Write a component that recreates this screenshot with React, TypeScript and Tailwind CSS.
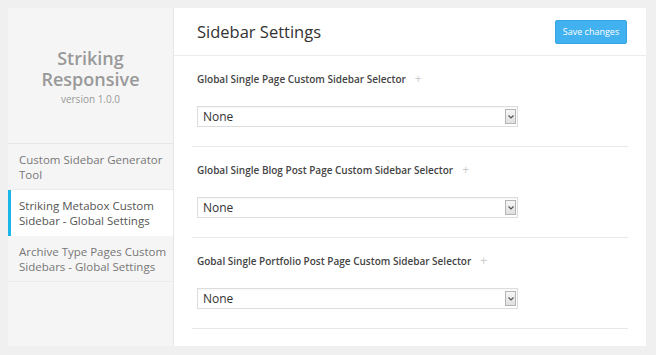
import React from "react";

function SelectBox() {
  return (
    <div className="flex h-[21px] w-[321px] items-center justify-between border border-[#dddddd] bg-white pl-[5px] pr-[1px] shadow-[inset_0_1px_2px_rgba(0,0,0,0.04)]">
      <span className="text-[12px] leading-none text-[#333333]">None</span>
      <div className="flex h-[15px] w-[11px] items-center justify-center border border-[#b4b4b4] bg-gradient-to-b from-[#f6f6f6] to-[#e0e0e0]">
        <svg width="6" height="4" viewBox="0 0 6 4">
          <path d="M0.5 0.5 L3 3 L5.5 0.5" stroke="#555" strokeWidth="1.2" fill="none" />
        </svg>
      </div>
    </div>
  );
}

function Section({ label }: { label: string }) {
  return (
    <div className="mx-[18px] flex h-[91px] flex-col border-b border-[#e8e8e8] pl-[5px] pt-[15px]">
      <div className="flex h-[16px] items-center">
        <span className="text-[10px] font-semibold text-[#444444]">{label}</span>
        <span className="ml-[9px] text-[12px] leading-none text-[#cccccc]">+</span>
      </div>
      <div className="mt-[19px]">
        <SelectBox />
      </div>
    </div>
  );
}

export default function App() {
  return (
    <div
      className="flex h-[355px] w-[656px] bg-[#f0f0f0] pl-[8px] pt-[8px]"
      style={{ fontFamily: '"Open Sans", "Noto Sans", sans-serif' }}
    >
      <div className="flex h-[338px] w-[166px] flex-col border-r border-[#e6e6e6] bg-[#f5f5f5]">
        <div className="flex h-[136px] flex-col items-center border-b border-[#e8e8e8] pt-[40px]">
          <div className="text-center text-[18px] font-semibold leading-[21px] text-[#999999]">
            Striking
            <br />
            Responsive
          </div>
          <div className="mt-[2px] text-[10px] leading-[14px] text-[#999999]">version 1.0.0</div>
        </div>
        <div className="flex h-[46px] flex-col justify-center border-b border-[#ececec] pl-[11px] text-[11.5px] leading-[15px] text-[#777777]">
          <div>Custom Sidebar Generator</div>
          <div>Tool</div>
        </div>
        <div className="flex h-[46px] flex-col justify-center border-l-[3px] border-[#1cb5ea] bg-white pl-[8px] text-[11.5px] leading-[15px] text-[#555555]">
          <div>Striking Metabox Custom</div>
          <div>Sidebar - Global Settings</div>
        </div>
        <div className="flex h-[46px] flex-col justify-center border-b border-[#ececec] pl-[11px] text-[11.5px] leading-[15px] text-[#777777]">
          <div>Archive Type Pages Custom</div>
          <div>Sidebars - Global Settings</div>
        </div>
      </div>
      <div className="flex h-[338px] w-[472px] flex-col bg-white">
        <div className="flex h-[48px] items-center justify-between border-b border-[#ececec] pl-[23px] pr-[19px]">
          <div className="pt-[2px] text-[16.5px] text-[#333333]">Sidebar Settings</div>
          <div className="flex h-[24px] w-[72px] items-center justify-center rounded-[2px] border border-[#35a5e6] bg-[#41b1f0] text-[9px] text-white">
            Save changes
          </div>
        </div>
        <Section label="Global Single Page Custom Sidebar Selector" />
        <Section label="Global Single Blog Post Page Custom Sidebar Selector" />
        <Section label="Gobal Single Portfolio Post Page Custom Sidebar Selector" />
      </div>
    </div>
  );
}
